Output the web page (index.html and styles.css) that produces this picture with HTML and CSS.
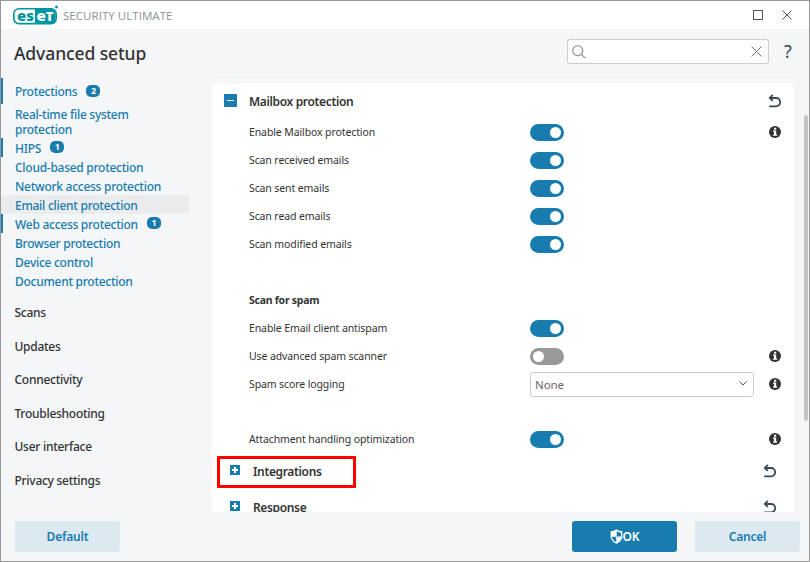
FILE: index.html
```
<!DOCTYPE html>
<html lang="en">
<head>
	<meta charset="utf-8">
	<title>Advanced setup</title>
	<link rel="stylesheet" href="styles.css">
</head>
<body>
	<svg class="defs" width="0" height="0">
		<symbol id="undo" viewBox="0 0 14 14">
			<path d="M2 4H8a4.200 4.200 0 0 1 0 8.400H1.200M4.800 .8 1.800 4l3 2.800" fill="none" stroke="#3b4854" stroke-width="1.800"/>
		</symbol>
		<symbol id="info" viewBox="0 0 12 12">
			<circle cx="6" cy="6" r="6" fill="#333"/>
			<path d="M5 1.800h2.200v1.900H5zM4 4.500H7.200v3.900h1v1.300H4V8.400H5V5.800H4z" fill="#fff"/>
		</symbol>
	</svg>
	<div class="window">
		<div class="titlebar">
			<svg class="logo" width="46" height="20" viewBox="0 0 46 20">
				<rect x=".8" y="3.800" width="42.400" height="14.800" rx="5" fill="#fff" stroke="#0096a1" stroke-width="1.600"/>
				<path d="M22 4h16.500a4 4 0 0 1 4 4v6.500a4 4 0 0 1-4 4H22z" fill="#0096a1"/>
				<text x="4" y="15.500" class="logo-a" textLength="17" lengthAdjust="spacingAndGlyphs">es</text>
				<text x="23.500" y="15.500" class="logo-b" textLength="17" lengthAdjust="spacingAndGlyphs">e<tspan class="logo-t">T</tspan></text>
				<circle cx="43.500" cy="2" r="1.500" fill="#0096a1"/>
			</svg>
			<span class="product">SECURITY ULTIMATE</span>
			<svg class="max" width="10" height="10"><rect x=".5" y=".5" width="9" height="9" fill="none" stroke="#555"/></svg>
			<svg class="close" width="10" height="10"><path d="M.5.5l9 9M9.500.5l-9 9" stroke="#555"/></svg>
		</div>
		<div class="header">
			<h1>Advanced setup</h1>
			<div class="search">
				<svg width="14" height="14"><circle cx="5.700" cy="5.700" r="5" fill="none" stroke="#888" stroke-width="1.100"/><path d="M9.200 9.200l4 4" stroke="#888" stroke-width="1.200"/></svg>
				<svg width="11" height="11"><path d="M.5.5l10 10M10.500.5l-10 10" stroke="#777"/></svg>
			</div>
			<span class="help">?</span>
		</div>
		<div class="main">
			<div class="nav">
				<div class="item first marked"><span>Protections</span><b>2</b></div>
				<div class="item two"><span>Real-time file system<br>protection</span></div>
				<div class="item marked"><span>HIPS</span><b>1</b></div>
				<div class="item"><span>Cloud-based protection</span></div>
				<div class="item"><span>Network access protection</span></div>
				<div class="item active"><span>Email client protection</span></div>
				<div class="item marked"><span>Web access protection</span><b>1</b></div>
				<div class="item"><span>Browser protection</span></div>
				<div class="item"><span>Device control</span></div>
				<div class="item"><span>Document protection</span></div>
				<div class="sections">
					<div>Scans</div>
					<div>Updates</div>
					<div>Connectivity</div>
					<div>Troubleshooting</div>
					<div>User interface</div>
					<div>Privacy settings</div>
				</div>
			</div>
			<div class="content">
				<div class="prev"></div>
				<div class="panel">
					<div class="head">
						<i class="box minus"></i>
						<span>Mailbox protection</span>
						<svg width="14" height="14"><use href="#undo"/></svg>
					</div>
					<div class="row"><label>Enable Mailbox protection</label><i class="toggle"></i><svg width="12" height="12"><use href="#info"/></svg></div>
					<div class="row"><label>Scan received emails</label><i class="toggle"></i></div>
					<div class="row"><label>Scan sent emails</label><i class="toggle"></i></div>
					<div class="row"><label>Scan read emails</label><i class="toggle"></i></div>
					<div class="row"><label>Scan modified emails</label><i class="toggle"></i></div>
					<div class="row group"><label>Scan for spam</label></div>
					<div class="row"><label>Enable Email client antispam</label><i class="toggle"></i></div>
					<div class="row"><label>Use advanced spam scanner</label><i class="toggle off"></i><svg width="12" height="12"><use href="#info"/></svg></div>
					<div class="row">
						<label>Spam score logging</label>
						<div class="select">None<svg width="8" height="5"><path d="M.5.5L4 4 7.500.5" fill="none" stroke="#555"/></svg></div>
						<svg width="12" height="12"><use href="#info"/></svg>
					</div>
					<div class="row spaced"><label>Attachment handling optimization</label><i class="toggle"></i><svg width="12" height="12"><use href="#info"/></svg></div>
					<div class="head sub">
						<i class="box plus"></i>
						<span>Integrations</span>
						<svg width="14" height="14"><use href="#undo"/></svg>
						<div class="outline"></div>
					</div>
					<div class="head sub">
						<i class="box plus"></i>
						<span>Response</span>
						<svg width="14" height="14"><use href="#undo"/></svg>
					</div>
				</div>
			</div>
			<div class="scroll"><div class="thumb"></div></div>
		</div>
		<div class="footer">
			<div class="btn">Default</div>
			<div class="btn ok">
				<svg width="13" height="15" viewBox="0 0 12 14"><path d="M6 .3C4.500 1.500 2.500 2 .5 2v5c0 3 2.500 5.500 5.500 6.700C9 12.500 11.500 10 11.500 7V2C9.500 2 7.500 1.500 6 .3z" fill="#fff"/><path d="M6.200 2.200c1.200.8 2.500 1.200 4 1.300V7h-4zM1.700 7.200H5.800V12.200C3.400 11.200 1.800 9.500 1.700 7.200z" fill="#187cae"/></svg>OK
			</div>
			<div class="btn">Cancel</div>
		</div>
	</div>
</body>
</html>
```
FILE: styles.css
```
* {
	box-sizing: border-box;
}
body {
	margin: 0;
	font-family: "Noto Sans", "Open Sans", sans-serif;
	font-size: 12px;
	color: #333;
}
svg {
	display: block;
	flex: none;
}
.defs {
	position: absolute;
}
.window {
	width: 810px;
	height: 562px;
	border: 1px solid #999;
	background: #f4f6f8;
	display: flex;
	flex-direction: column;
	overflow: hidden;
}
.titlebar {
	height: 28px;
	flex: none;
	background: #fff;
	display: flex;
	align-items: center;
	padding: 0 17px 0 12px;
}
.logo {
	margin-top: -1px;
}
.logo text {
	font: 800 14px "Open Sans", sans-serif;
}
.logo-a {
	fill: #0096a1;
}
.logo-b {
	fill: #fff;
}
.logo .logo-t {
	font-size: 12px;
}
.product {
	margin-left: 4px;
	font-family: "Open Sans", sans-serif;
	font-size: 11.5px;
	letter-spacing: 0.05px;
	color: #8b9297;
}
.max {
	margin-left: auto;
}
.close {
	margin-left: 19px;
}
.header {
	height: 46px;
	flex: none;
	display: flex;
	align-items: center;
	padding: 0 16px 0 13px;
}
h1 {
	margin: 2px 0 0;
	font-size: 17.5px;
	font-weight: 500;
	letter-spacing: -0.1px;
}
.search {
	margin-left: auto;
	margin-top: -1px;
	width: 202px;
	height: 25px;
	border: 1px solid #ccc;
	border-radius: 3px;
	background: #fff;
	display: flex;
	align-items: center;
	justify-content: space-between;
	padding: 0 6px 0 4px;
}
.help {
	width: 9px;
	margin: -2px 0 0 15px;
	font-size: 18px;
	color: #3b4854;
}
.main {
	flex: none;
	height: 437px;
	display: flex;
}
.nav {
	width: 211px;
	padding-top: 3px;
	font-size: 12px;
	font-weight: 500;
	letter-spacing: -0.27px;
}
.item {
	display: flex;
	align-items: center;
	width: 188px;
	height: 19px;
	padding: 1px 0 0 14px;
	line-height: 15px;
	color: #187cae;
	white-space: nowrap;
}
.item.first {
	height: 26px;
}
.item.two {
	height: 34px;
}
.item.marked {
	padding-left: 12px;
	border-left: 2px solid #187cae;
}
.item.active {
	background: #ebecee;
	border-radius: 0 3px 3px 0;
}
.item b {
	width: 14px;
	height: 12px;
	margin: -2px 0 0 9px;
	border-radius: 5px;
	background: #187cae;
	color: #fff;
	font-size: 9px;
	line-height: 12px;
	text-align: center;
}
.sections {
	padding: 5px 0 0 13.5px;
}
.sections div {
	height: 33.6px;
	line-height: 35px;
}
.content {
	width: 582px;
	overflow: hidden;
}
.prev {
	height: 2px;
	margin-bottom: 6px;
	background: linear-gradient(#fff, #edeff1);
	border-radius: 0 0 4px 4px;
}
.panel {
	background: #fff;
	border-radius: 4px;
}
.head {
	height: 35px;
	display: flex;
	align-items: center;
	padding: 0 12px;
	font-size: 12px;
	font-weight: 600;
	letter-spacing: -0.35px;
}
.head span {
	margin-top: 1px;
}
.head svg {
	margin-left: auto;
}
.box {
	width: 13px;
	height: 13px;
	margin-right: 12px;
	background: #187cae;
	display: grid;
	place-items: center;
}
.box::before,
.box::after {
	content: "";
	grid-area: 1 / 1;
	width: 7px;
	height: 2px;
	background: #fff;
}
.minus::before {
	height: 1px;
}
.minus::after {
	display: none;
}
.plus {
	width: 10px;
	height: 10px;
	margin: -2px 13px 0 0;
}
.plus::before,
.plus::after {
	width: 6px;
	height: 2px;
}
.plus::after {
	width: 2px;
	height: 6px;
}
.head.sub {
	position: relative;
	height: 36px;
	padding: 0 17px 0 18px;
}
/* highlight frame around the row label */
.outline {
	position: absolute;
	left: 5px;
	top: 3px;
	width: 139px;
	height: 32px;
	border: 3px solid #f00;
}
.row {
	height: 28px;
	display: grid;
	grid-template-columns: 281px 224px 1fr;
	align-items: center;
	padding: 0 13px 0 37px;
	font-size: 10.5px;
	letter-spacing: -0.11px;
}
.row label {
	margin-top: -1px;
}
.row > svg {
	justify-self: end;
}
.row.group {
	margin-top: 28px;
	font-weight: bold;
	letter-spacing: -0.25px;
}
.row.spaced {
	margin-top: 27px;
}
.toggle {
	width: 34px;
	height: 17px;
	border-radius: 9px;
	background: #187cae;
	padding: 3px;
	display: flex;
	justify-content: flex-end;
}
.toggle::before {
	content: "";
	width: 11px;
	height: 11px;
	border-radius: 50%;
	background: #fff;
}
.toggle.off {
	background: #999;
	justify-content: flex-start;
}
.select {
	height: 25px;
	border: 1px solid #ccc;
	border-radius: 3px;
	display: flex;
	align-items: center;
	justify-content: space-between;
	padding: 0 6px 0 4px;
	font-size: 11.5px;
	color: #666;
}
.select svg {
	margin-top: -2px;
}
.scroll {
	margin-left: auto;
	width: 5px;
	padding-top: 40px;
}
.thumb {
	width: 4px;
	height: 306px;
	border-radius: 2px;
	background: #c2c3c5;
}
.footer {
	display: flex;
	padding: 9px 9px 0 14px;
}
.btn {
	width: 105px;
	height: 31px;
	border-radius: 3px;
	background: #dde9f0;
	color: #187cae;
	font-size: 12px;
	font-weight: 600;
	letter-spacing: -0.2px;
	display: flex;
	align-items: center;
	justify-content: center;
}
.ok {
	margin: 0 18px 0 auto;
	background: #187cae;
	color: #fff;
}
```
